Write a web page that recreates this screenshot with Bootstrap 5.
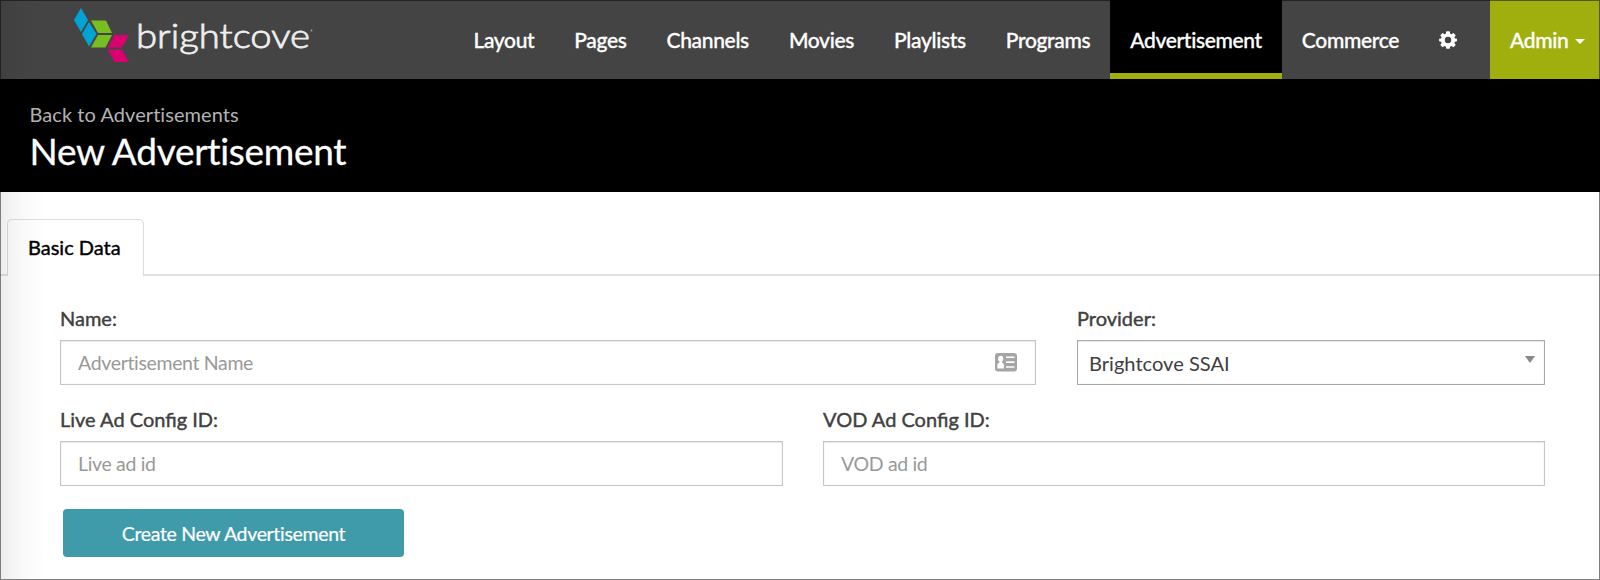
<!DOCTYPE html>
<html lang="en">
<head>
<meta charset="utf-8">
<meta name="viewport" content="width=device-width, initial-scale=1">
<title>New Advertisement</title>
<link href="https://cdn.jsdelivr.net/npm/bootstrap@5.3.0/dist/css/bootstrap.min.css" rel="stylesheet">
<style>
  body { font-family: Lato, "Liberation Sans", sans-serif; font-size: 20px; color: #404040; background: #fff; }
  .app-frame { height: 580px; }
  /* outline and soft shade on the left edge of the window */
  .app-frame::after { content: ""; position: absolute; inset: 0; pointer-events: none; border: 1px solid rgba(0,0,0,.5);
    background: linear-gradient(to right, rgba(0,0,0,.07), rgba(0,0,0,.04) 12px, rgba(0,0,0,.015) 28px, transparent 46px) no-repeat; }
  .top-bar { height: 79px; background: #444; }
  .brand-logo { margin-left: 70px; }
  .top-bar .nav-link { height: 79px; padding: 0 20px; display: flex; align-items: center; color: #fff; font-size: 21px; font-weight: 500; letter-spacing: -.335px; line-height: 79px; border-radius: 0; -webkit-text-stroke: .3px #fff; }
  .top-bar .nav-link.active { background: #000; border-bottom: 6px solid #a0af0d; padding-top: 6px; }
  .top-bar .gear-link { padding: 0 33px 0 20px; }
  .top-bar .admin-link { background: #a0af0d; width: 110px; }
  .top-bar .dropdown-toggle::after { margin: 3px 0 0 7px; border-top-width: 5px; border-left-width: 5px; border-right-width: 5px; vertical-align: 0; }
  .title-bar { height: 113px; background: #000; padding: 21px 30px 0 29.5px; }
  .title-bar a { color: #b3b3b3; font-size: 20px; line-height: 28px; letter-spacing: .06px; }
  .title-bar h1 { color: #fff; font-size: 37px; font-weight: 400; letter-spacing: -.3px; line-height: 46px; -webkit-text-stroke: .3px #fff; }
  .form-tabs { padding: 27px 0 0 7px; border-bottom: 2px solid #e2e2e2; }
  .form-tabs .nav-link, .form-tabs .nav-link.active { color: #000; height: 57px; width: 137px; padding: 0 0 0 20px; margin-bottom: -2px; line-height: 54px; border: 1.5px solid #ddd; border-bottom: 0; border-radius: 5px 5px 0 0; -webkit-text-stroke: .4px #000; }
  .ad-form { padding: 28px 55px 0 60px; }
  .ad-form .field-rows { display: grid; row-gap: 20px; }
  .ad-form .form-label { line-height: 28px; margin-bottom: 8px; -webkit-text-stroke: .4px #404040; }
  .ad-form .form-control, .ad-form .form-select { height: 45px; border: 1px solid #c6c6c6; border-radius: 0; font-size: 19.5px; padding: 0 17px; color: #404040; background-color: transparent; box-shadow: inset 0 0 1px 0 rgba(0,0,0,.18), inset 0 1px 1px rgba(0,0,0,.08); }
  .ad-form .form-control { letter-spacing: -.34px; }
  .ad-form .form-control::placeholder { color: #999; }
  .ad-form .form-select { border-color: #aaa; background-image: none; padding: 2px 11px 0; font-size: 20.1px; letter-spacing: 0; }
  .ad-form .name-col { flex: 0 0 976px; }
  .ad-form .provider-col { flex: 0 0 468px; }
  .contact-icon { position: absolute; right: 19px; top: 13px; }
  .select-arrow { position: absolute; right: 10px; top: 16px; }
  .btn-create { margin: 23px 0 0 3px; width: 341px; height: 48px; background: #3f9ba9; color: #fff; font-size: 19.5px; letter-spacing: -.33px; border: 0; border-radius: 4px; padding: 1px 0 0; -webkit-text-stroke: .2px #fff; }
</style>
</head>
<body>
<div class="app-frame position-relative overflow-hidden">
  <nav class="top-bar d-flex justify-content-between" aria-label="Main">
    <a href="#" class="brand-logo">
      <svg class="d-block" width="250" height="70" viewBox="70 0 250 70" role="img" aria-label="brightcove">
        <g fill="#00a4d4"><path d="M81 8 88 20 81 32 74 20Z"/><path d="M89 22 96.500 34 89 46.500 82 34Z"/></g>
        <g fill="#78be20"><path d="M91 20.500H105Q106 20.500 106.500 21.500L112 33H98Z"/><path d="M98 35H112L105.500 47.500H91Z"/></g>
        <g fill="#da006f"><path d="M114.500 35H129L122 47.500H107.500Z"/><path d="M107.500 49.500H122L129 62H115.500Q114.500 62 114 61Z"/></g>
        <text x="136" y="47.500" fill="#eee" stroke="#eee" stroke-width=".8" font-family="Lato, sans-serif" font-weight="300" font-size="34" textLength="174" lengthAdjust="spacingAndGlyphs">brightcove</text>
        <circle cx="311.500" cy="30.500" r=".9" fill="#aaa"/>
      </svg>
    </a>
    <div class="nav flex-nowrap">
      <a class="nav-link" href="#">Layout</a>
      <a class="nav-link" href="#">Pages</a>
      <a class="nav-link" href="#">Channels</a>
      <a class="nav-link" href="#">Movies</a>
      <a class="nav-link" href="#">Playlists</a>
      <a class="nav-link" href="#">Programs</a>
      <a class="nav-link active" href="#">Advertisement</a>
      <a class="nav-link" href="#">Commerce</a>
      <a class="nav-link gear-link" href="#" aria-label="Settings">
        <svg width="18" height="18" viewBox="0 0 18 18" fill="#fff" fill-rule="evenodd"><path d="M7.300.3h3.400l.5 2.400 1.200.5 2.100-1.300 2.200 2.300-1.300 2 .5 1.200 2.100.4v2.500l-2.100.4-.5 1.300 1.300 2-2.200 2.200-2.100-1.300-1.200.5-.5 2.400H7.300l-.5-2.400-1.200-.5-2.100 1.300-2.200-2.200 1.300-2-.5-1.300L.1 10.300V7.800l2-.4.5-1.200-1.300-2 2.200-2.300 2.100 1.300 1.200-.5ZM9 5.800a3.200 3.200 0 1 0 0 6.400 3.200 3.200 0 0 0 0-6.400Z"/></svg>
      </a>
      <a class="nav-link admin-link dropdown-toggle" href="#">Admin</a>
    </div>
  </nav>
  <header class="title-bar">
    <a class="d-block text-decoration-none" href="#">Back to Advertisements</a>
    <h1 class="m-0">New Advertisement</h1>
  </header>
  <ul class="nav nav-tabs form-tabs">
    <li class="nav-item"><a class="nav-link active" href="#">Basic Data</a></li>
  </ul>
  <form class="ad-form">
    <div class="field-rows">
      <div class="d-flex justify-content-between">
        <div class="name-col">
          <label class="form-label d-block" for="adName">Name:</label>
          <div class="position-relative">
            <input id="adName" class="form-control" placeholder="Advertisement Name">
            <svg class="contact-icon" width="22" height="19" viewBox="0 0 22 19"><rect width="22" height="18.500" rx="3" fill="#a5a5a5"/><g fill="#fff"><ellipse cx="5.700" cy="5.800" rx="2.600" ry="3"/><path d="M4.500 8H6.900V9.500Q9 10 9 12V15.500H2.300V12Q2.300 10 4.500 9.500Z"/><path d="M11 3.500h8.500v1.600H11zM11 8.200h8.500v1.700H11zM11 13.200h8.500v1.600H11z"/></g></svg>
          </div>
        </div>
        <div class="provider-col">
          <label class="form-label d-block" for="provider">Provider:</label>
          <div class="position-relative">
            <select id="provider" class="form-select"><option>Brightcove SSAI</option></select>
            <svg class="select-arrow" width="10" height="7" viewBox="0 0 10 7"><path d="M0 0H10L5 7Z" fill="#888"/></svg>
          </div>
        </div>
      </div>
      <div class="row gx-0 justify-content-between">
        <div class="col me-3 pe-4">
          <label class="form-label d-block" for="liveId">Live Ad Config ID:</label>
          <input id="liveId" class="form-control" placeholder="Live ad id">
        </div>
        <div class="col-auto" style="width:722px">
          <label class="form-label d-block" for="vodId">VOD Ad Config ID:</label>
          <input id="vodId" class="form-control" placeholder="VOD ad id">
        </div>
      </div>
    </div>
    <button type="button" class="btn btn-create">Create New Advertisement</button>
  </form>
</div>
<script src="https://cdn.jsdelivr.net/npm/bootstrap@5.3.0/dist/js/bootstrap.bundle.min.js"></script>
</body>
</html>
